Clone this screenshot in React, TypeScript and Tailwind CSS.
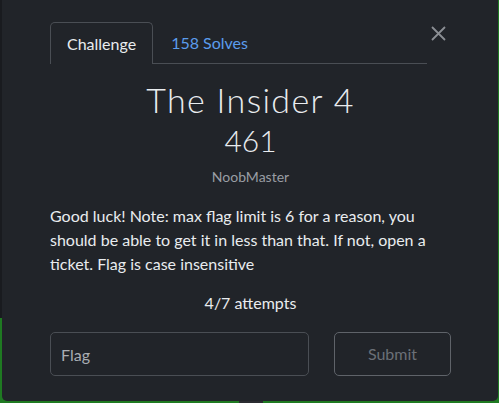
export default function App() {
  return (
    <div className="relative h-[403px] w-full overflow-hidden bg-[#1f7a22] font-['Lato','Liberation_Sans',sans-serif]">
      {/* page behind the modal */}
      <div className="h-[318px] w-[2px] bg-[#191b1f]"></div>
      <div className="absolute bottom-0 left-[239px] h-[2px] w-[24px] bg-[#2a2c30]"></div>

      {/* modal */}
      <div className="absolute left-[2px] right-[1px] top-0 bottom-[2px] rounded-b-[5px] bg-[#212429] pl-[48px] pr-[47px] pt-[22px]">
        <div className="flex items-start">
          <div className="flex flex-1 border-b border-[#4a4e54]">
            <div className="-mb-px rounded-t-[5px] border border-b-0 border-[#4a4e54] bg-[#212429] px-[16px] pb-[10px] pt-[10px] text-[16px] leading-[21px] text-[#e9ecef]">
              Challenge
            </div>
            <div className="px-[18px] pb-[10px] pt-[10px] text-[16px] leading-[21px] text-[#5b9cec]">
              158 Solves
            </div>
          </div>
          <button className="ml-[4px] mr-[5px] mt-[4px] flex h-[14px] w-[15px] items-center justify-center text-[#8b8e93]">
            <svg width="15" height="15" viewBox="0 0 15 15" fill="none" stroke="currentColor" strokeWidth="1.8">
              <path d="M1 1l13 13M14 1L1 14" />
            </svg>
          </button>
        </div>

        <h1 className="mt-[15px] text-center text-[34px] font-light leading-[41px] tracking-[0.04em] text-[#e9ecef]">
          The Insider 4
        </h1>
        <div className="mt-[2px] text-center text-[30px] font-light leading-[36px] text-[#e9ecef]">461</div>
        <div className="mt-[9px] text-center text-[14px] leading-[20px] text-[#9a9ea4]">NoobMaster</div>

        <p className="mt-[17px] text-[16px] leading-[24px] text-[#e9ecef]">
          Good luck! Note: max flag limit is 6 for a reason, you should be able to get it in less than that. If not, open a ticket. Flag is case insensitive
        </p>

        <div className="mt-[15px] text-center text-[16px] leading-[24px] text-[#e9ecef]">4/7 attempts</div>

        <div className="mt-[17px] flex gap-[25px]">
          <input
            placeholder="Flag"
            className="h-[44px] min-w-0 flex-1 rounded-[5px] border border-[#4a4e54] bg-transparent px-[10px] text-[16px] text-[#e9ecef] placeholder:text-[#a9adb3] outline-none"
          />
          <button className="h-[44px] w-[117px] rounded-[5px] border border-[#5f6369] text-[16px] text-[#6b7077]">
            Submit
          </button>
        </div>
      </div>
    </div>
  )
}
